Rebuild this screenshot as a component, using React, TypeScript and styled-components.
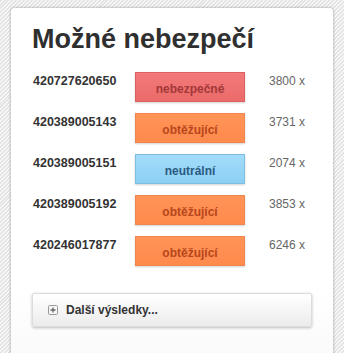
import React from "react";
import styled, { createGlobalStyle } from "styled-components";

const GlobalStyle = createGlobalStyle`
  html, body {
    margin: 0;
    padding: 0;
    height: 100%;
  }
  body {
    font-family: "Liberation Sans", Arial, sans-serif;
    background: repeating-linear-gradient(
      -45deg,
      #f7f7f7 0px,
      #f7f7f7 1.4px,
      #e2e2e2 1.4px,
      #e2e2e2 2.8px
    );
  }
`;

const Page = styled.div`
  padding: 8px 11px 0 11px;
  height: 353px;
  box-sizing: border-box;
  overflow: hidden;
`;

const Card = styled.div`
  background: linear-gradient(to bottom, #ffffff 0%, #ffffff 70%, #f7f7f7 100%);
  border-radius: 4px 4px 0 0;
  box-shadow: 0 0 3px rgba(0, 0, 0, 0.35);
  padding: 15px 21px 40px 21px;
  min-height: 400px;
  box-sizing: border-box;
`;

const Title = styled.h1`
  margin: 0 0 17px 0;
  font-size: 27px;
  line-height: 32px;
  font-weight: bold;
  color: #2f2f2f;
`;

const Table = styled.div`
  display: grid;
  grid-template-columns: 102px 110px 1fr;
  row-gap: 11px;
  padding-left: 1px;
`;

const Number = styled.div`
  font-size: 12.5px;
  line-height: 18px;
  font-weight: bold;
  color: #333333;
`;

type Level = "danger" | "annoying" | "neutral";

const levelColors: Record<Level, { top: string; bottom: string; border: string; text: string }> = {
  danger: { top: "#f27a7a", bottom: "#ec6a6a", border: "#dc6262", text: "#a33838" },
  annoying: { top: "#ff9457", bottom: "#ff8a4c", border: "#ef8650", text: "#b8461c" },
  neutral: { top: "#a3dcfa", bottom: "#8ccff4", border: "#7cbde0", text: "#2b5b82" },
};

const Badge = styled.div<{ $level: Level }>`
  height: 30px;
  box-sizing: border-box;
  border: 1px solid ${({ $level }) => levelColors[$level].border};
  background: linear-gradient(
    to bottom,
    ${({ $level }) => levelColors[$level].top},
    ${({ $level }) => levelColors[$level].bottom}
  );
  box-shadow: 0 1px 2px rgba(0, 0, 0, 0.18);
  color: ${({ $level }) => levelColors[$level].text};
  font-size: 12px;
  font-weight: bold;
  display: flex;
  align-items: center;
  justify-content: center;
  padding-top: 3px;
`;

const Count = styled.div`
  padding-left: 24px;
  font-size: 12px;
  line-height: 18px;
  color: #666666;
`;

const MoreButton = styled.button`
  margin-top: 27px;
  width: 100%;
  height: 34px;
  display: flex;
  align-items: center;
  gap: 8px;
  padding: 0 0 0 15px;
  border: 1px solid #dcdcdc;
  border-radius: 2px;
  background: linear-gradient(to bottom, #ffffff, #ececec);
  box-shadow: 0 1px 3px rgba(0, 0, 0, 0.25);
  font-family: "Liberation Sans", Arial, sans-serif;
  font-size: 12px;
  font-weight: bold;
  color: #333333;
  cursor: pointer;
  text-align: left;
`;

const PlusIcon = () => (
  <svg width="10" height="10" viewBox="0 0 10 10">
    <rect x="0.5" y="0.5" width="9" height="9" rx="1" fill="#f6f6f6" stroke="#999" />
    <path d="M5 2.5 V7.5 M2.5 5 H7.5" stroke="#666" strokeWidth="1.3" />
  </svg>
);

const rows: { num: string; level: Level; label: string; count: string }[] = [
  { num: "420727620650", level: "danger", label: "nebezpečné", count: "3800 x" },
  { num: "420389005143", level: "annoying", label: "obtěžující", count: "3731 x" },
  { num: "420389005151", level: "neutral", label: "neutrální", count: "2074 x" },
  { num: "420389005192", level: "annoying", label: "obtěžující", count: "3853 x" },
  { num: "420246017877", level: "annoying", label: "obtěžující", count: "6246 x" },
];

export default function App() {
  return (
    <>
      <GlobalStyle />
      <Page>
        <Card>
          <Title>Možné nebezpečí</Title>
          <Table>
            {rows.map((r) => (
              <React.Fragment key={r.num}>
                <Number>{r.num}</Number>
                <Badge $level={r.level}>{r.label}</Badge>
                <Count>{r.count}</Count>
              </React.Fragment>
            ))}
          </Table>
          <MoreButton>
            <PlusIcon />
            Další výsledky...
          </MoreButton>
        </Card>
      </Page>
    </>
  );
}
